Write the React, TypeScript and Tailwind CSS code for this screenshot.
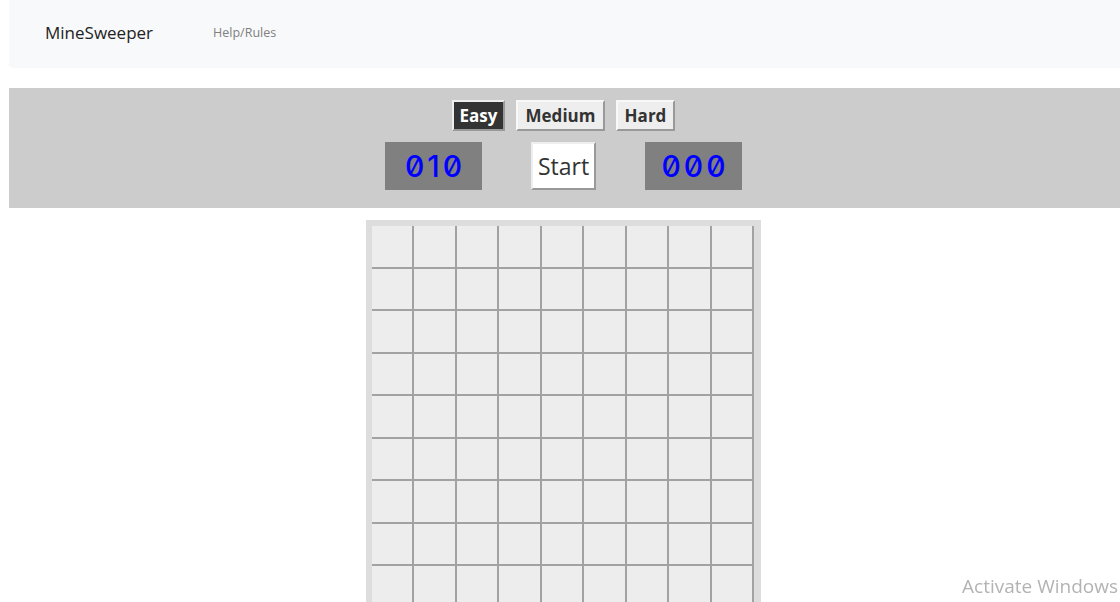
import React from "react";

const Digits = ({ value }: { value: string }) => (
  <div className="flex h-[48px] w-[97px] items-center justify-center bg-[#808080]">
    <span
      className="pl-[3px] text-[30px] font-medium leading-none tracking-[3px] text-[#0000ff] slashed-zero"
      style={{ fontFamily: "Inter, 'DejaVu Sans Mono', monospace" }}
    >
      {value}
    </span>
  </div>
);

export default function App() {
  const cells = Array.from({ length: 81 });
  return (
    <div className="min-h-[602px] bg-white" style={{ fontFamily: "'Open Sans', 'Noto Sans', sans-serif" }}>
      <div className="ml-[9px] mr-[2px]">
        <nav className="-mr-[2px] flex h-[68px] items-center rounded-bl-[4px] bg-[#f8f9fa] pb-[2px] pl-[36px]">
          <span className="text-[17px] text-[#222]">MineSweeper</span>
          <span className="ml-[60px] text-[12.5px] text-[#808080]">Help/Rules</span>
        </nav>
        <div className="-mr-[2px] mt-[20px] flex h-[120px] flex-col items-center bg-[#cccccc] pr-[2px] pt-[12px]">
          <div className="flex gap-[11px]">
            <button className="h-[31px] w-[53px] border-2 border-t-[#eeeeee] border-l-[#eeeeee] border-b-[#999999] border-r-[#999999] bg-[#333333] text-[17px] font-bold text-white">
              Easy
            </button>
            <button className="h-[31px] w-[89px] border-2 border-t-[#f8f8f8] border-l-[#f8f8f8] border-b-[#999999] border-r-[#999999] bg-[#eeeeee] text-[17px] font-bold text-[#333333]">
              Medium
            </button>
            <button className="h-[31px] w-[59px] border-2 border-t-[#f8f8f8] border-l-[#f8f8f8] border-b-[#999999] border-r-[#999999] bg-[#eeeeee] text-[17px] font-bold text-[#333333]">
              Hard
            </button>
          </div>
          <div className="mt-[11px] flex items-center gap-[49px]">
            <Digits value="010" />
            <button className="h-[48px] w-[65px] border-2 border-t-[#eeeeee] border-l-[#eeeeee] border-b-[#999999] border-r-[#999999] bg-white text-[23px] text-[#333333]">
              Start
            </button>
            <Digits value="000" />
          </div>
        </div>
        <div className="mt-[12px] flex justify-center">
          <div className="bg-[#dddddd] pb-[7px] pl-[6px] pr-[7px] pt-[6px]">
            <div className="grid grid-cols-[repeat(9,42.5px)]">
              {cells.map((_, i) => (
                <div
                  key={i}
                  className="h-[42.5px] w-[42.5px] border-b-2 border-r-2 border-b-[#a2a2a2] border-r-[#a2a2a2] bg-[#ededed]"
                />
              ))}
            </div>
          </div>
        </div>
      </div>
      <div
        className="fixed bottom-[2px] right-[2px] text-[19px] text-[#b3b3b3]"
        style={{ fontFamily: "'Open Sans', sans-serif" }}
      >
        Activate Windows
      </div>
    </div>
  );
}
